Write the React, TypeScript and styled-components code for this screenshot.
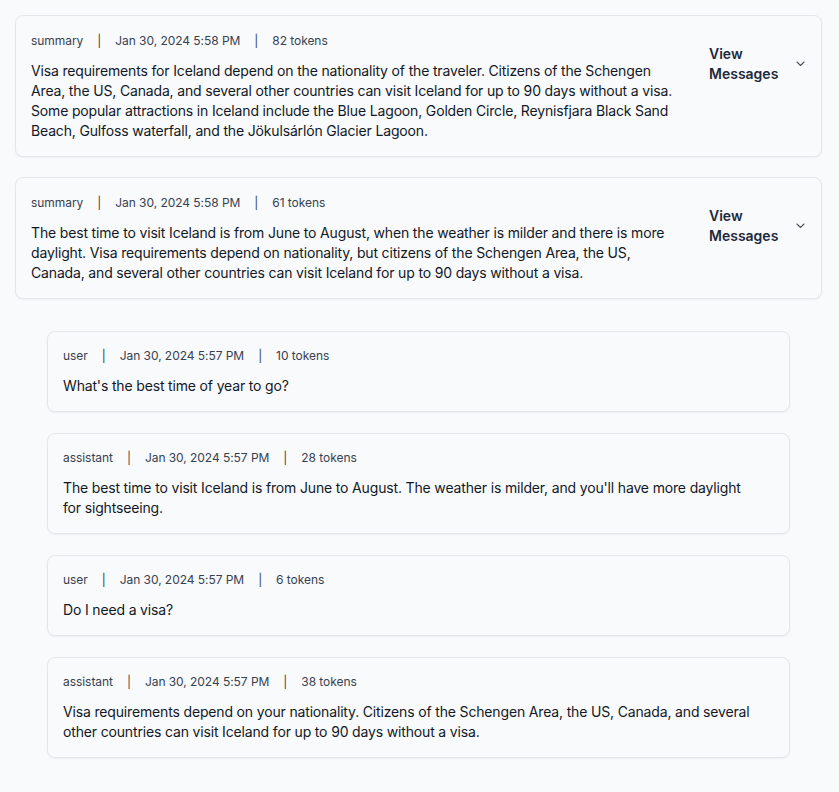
import React from "react";
import styled, { createGlobalStyle } from "styled-components";

const Global = createGlobalStyle`
  html, body { margin: 0; padding: 0; background: #f9fafb; }
  body { font-family: Inter, "Noto Sans", sans-serif; color: #1f2937; }
`;

const Page = styled.div`
  padding: 15px 17px 15px 15px;
  display: flex;
  flex-direction: column;
`;

const Card = styled.div<{ $nested?: boolean }>`
  border: 1px solid #e5e7eb;
  border-radius: 8px;
  background: #f9fafb;
  box-shadow: 0 1px 2px rgba(0, 0, 0, 0.05);
  padding: ${(p) => (p.$nested ? "15px 32px 15px 15px" : "16px 16px 15px 15px")};
  margin: ${(p) => (p.$nested ? "0 32px 21px 32px" : "0 0 20px 0")};
  display: flex;
  gap: 24px;
  align-items: flex-start;
`;

const Content = styled.div`
  flex: 1;
  min-width: 0;
`;

const Meta = styled.div`
  font-size: 12px;
  line-height: 18px;
  letter-spacing: -0.05px;
  color: #374151;
  display: flex;
`;

const Sep = styled.span`
  padding: 0 14px;
`;

const Body = styled.p`
  margin: 11px 0 0 0;
  font-size: 14px;
  line-height: 20px;
  letter-spacing: -0.16px;
  color: #111827;
`;

const Toggle = styled.button`
  display: flex;
  align-items: center;
  gap: 14px;
  width: 96px;
  margin-top: 12px;
  padding: 0;
  border: none;
  background: transparent;
  font-family: inherit;
  font-size: 14px;
  font-weight: 600;
  line-height: 20px;
  color: #1e293b;
  text-align: left;
  cursor: pointer;
`;

const ToggleLabel = styled.span`
  flex: 1;
`;

const Spacer = styled.div`
  height: 12px;
`;

type Msg = { role: string; time: string; tokens: number; text: string };

const summaries: Msg[] = [
  {
    role: "summary",
    time: "Jan 30, 2024 5:58 PM",
    tokens: 82,
    text: "Visa requirements for Iceland depend on the nationality of the traveler. Citizens of the Schengen Area, the US, Canada, and several other countries can visit Iceland for up to 90 days without a visa. Some popular attractions in Iceland include the Blue Lagoon, Golden Circle, Reynisfjara Black Sand Beach, Gulfoss waterfall, and the Jökulsárlón Glacier Lagoon.",
  },
  {
    role: "summary",
    time: "Jan 30, 2024 5:58 PM",
    tokens: 61,
    text: "The best time to visit Iceland is from June to August, when the weather is milder and there is more daylight. Visa requirements depend on nationality, but citizens of the Schengen Area, the US, Canada, and several other countries can visit Iceland for up to 90 days without a visa.",
  },
];

const messages: Msg[] = [
  { role: "user", time: "Jan 30, 2024 5:57 PM", tokens: 10, text: "What's the best time of year to go?" },
  {
    role: "assistant",
    time: "Jan 30, 2024 5:57 PM",
    tokens: 28,
    text: "The best time to visit Iceland is from June to August. The weather is milder, and you'll have more daylight for sightseeing.",
  },
  { role: "user", time: "Jan 30, 2024 5:57 PM", tokens: 6, text: "Do I need a visa?" },
  {
    role: "assistant",
    time: "Jan 30, 2024 5:57 PM",
    tokens: 38,
    text: "Visa requirements depend on your nationality. Citizens of the Schengen Area, the US, Canada, and several other countries can visit Iceland for up to 90 days without a visa.",
  },
];

const Chevron = () => (
  <svg width="9" height="6" viewBox="0 0 9 6" fill="none">
    <path d="M1 1l3.5 3.5L8 1" stroke="#4b5563" strokeWidth="1.1" strokeLinecap="round" strokeLinejoin="round" />
  </svg>
);

const MetaLine = ({ m }: { m: Msg }) => (
  <Meta>
    <span>{m.role}</span>
    <Sep>|</Sep>
    <span>{m.time}</span>
    <Sep>|</Sep>
    <span>{m.tokens} tokens</span>
  </Meta>
);

export default function App() {
  return (
    <>
      <Global />
      <Page>
        {summaries.map((m, i) => (
          <Card key={i}>
            <Content>
              <MetaLine m={m} />
              <Body>{m.text}</Body>
            </Content>
            <Toggle>
              <ToggleLabel>View Messages</ToggleLabel>
              <Chevron />
            </Toggle>
          </Card>
        ))}
        <Spacer />
        {messages.map((m, i) => (
          <Card key={i} $nested>
            <Content>
              <MetaLine m={m} />
              <Body>{m.text}</Body>
            </Content>
          </Card>
        ))}
      </Page>
    </>
  );
}
